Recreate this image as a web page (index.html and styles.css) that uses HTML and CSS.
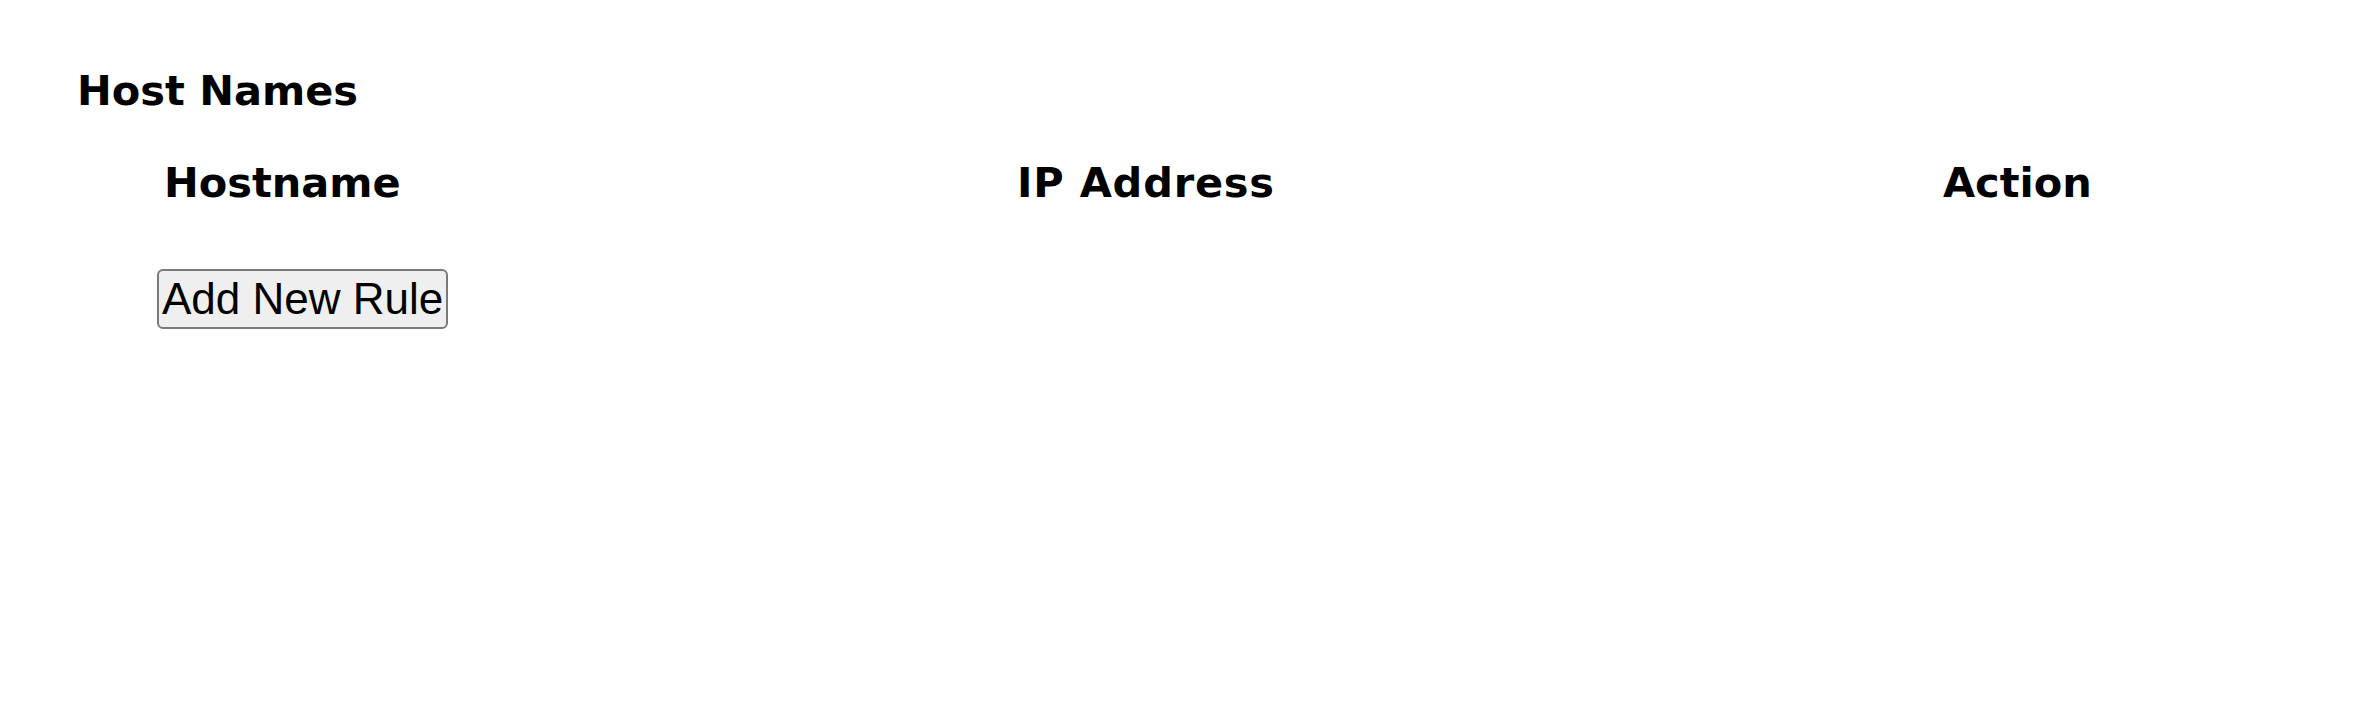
FILE: index.html
```html
<!DOCTYPE html>
<html>
<head>
<meta charset="utf-8">
<title>Host Names</title>
<link rel="stylesheet" href="styles.css">
</head>
<body>
<div class="page">
  <h3 class="title">Host Names</h3>
  <table class="rules">
    <colgroup>
      <col class="col-host">
      <col class="col-ip">
      <col class="col-action">
    </colgroup>
    <thead>
      <tr>
        <th class="host">Hostname</th>
        <th class="ip">IP Address</th>
        <th>Action</th>
      </tr>
    </thead>
    <tbody>
      <tr>
        <td><button class="add-btn" type="button">Add New Rule</button></td>
        <td></td>
        <td></td>
      </tr>
    </tbody>
  </table>
</div>
</body>
</html>
```

FILE: styles.css
```css
html, body {
  margin: 0;
  padding: 0;
  background: #ffffff;
  color: #000000;
}

.page {
  padding: 67px 0 0 77px;
  font-family: "DejaVu Sans", Verdana, sans-serif;
}

.title {
  margin: 0;
  font-size: 41.5px;
  line-height: 48px;
  font-weight: bold;
}

.rules {
  margin-left: 80px;
  border-collapse: collapse;
  border-spacing: 0;
  table-layout: fixed;
  width: 2100px;
}

.col-host { width: 855px; }
.col-ip { width: 926px; }
.col-action { width: 319px; }

.rules th {
  padding: 44px 5px 0 5px;
  text-align: left;
  font-size: 41.5px;
  line-height: 48px;
  font-weight: bold;
}

.rules th.host {
  padding-left: 7px;
}

.rules th.ip {
  letter-spacing: 0.8px;
}

.rules td {
  padding: 62px 0 0 0;
  vertical-align: top;
}

.add-btn {
  margin: 0;
  font-family: "Liberation Sans", Arial, sans-serif;
  font-size: 44px;
  line-height: 50px;
  color: #000000;
  background: #efefef;
  border: 2px solid #7a7a7a;
  border-radius: 6px;
  padding: 3px 3px;
}
```
